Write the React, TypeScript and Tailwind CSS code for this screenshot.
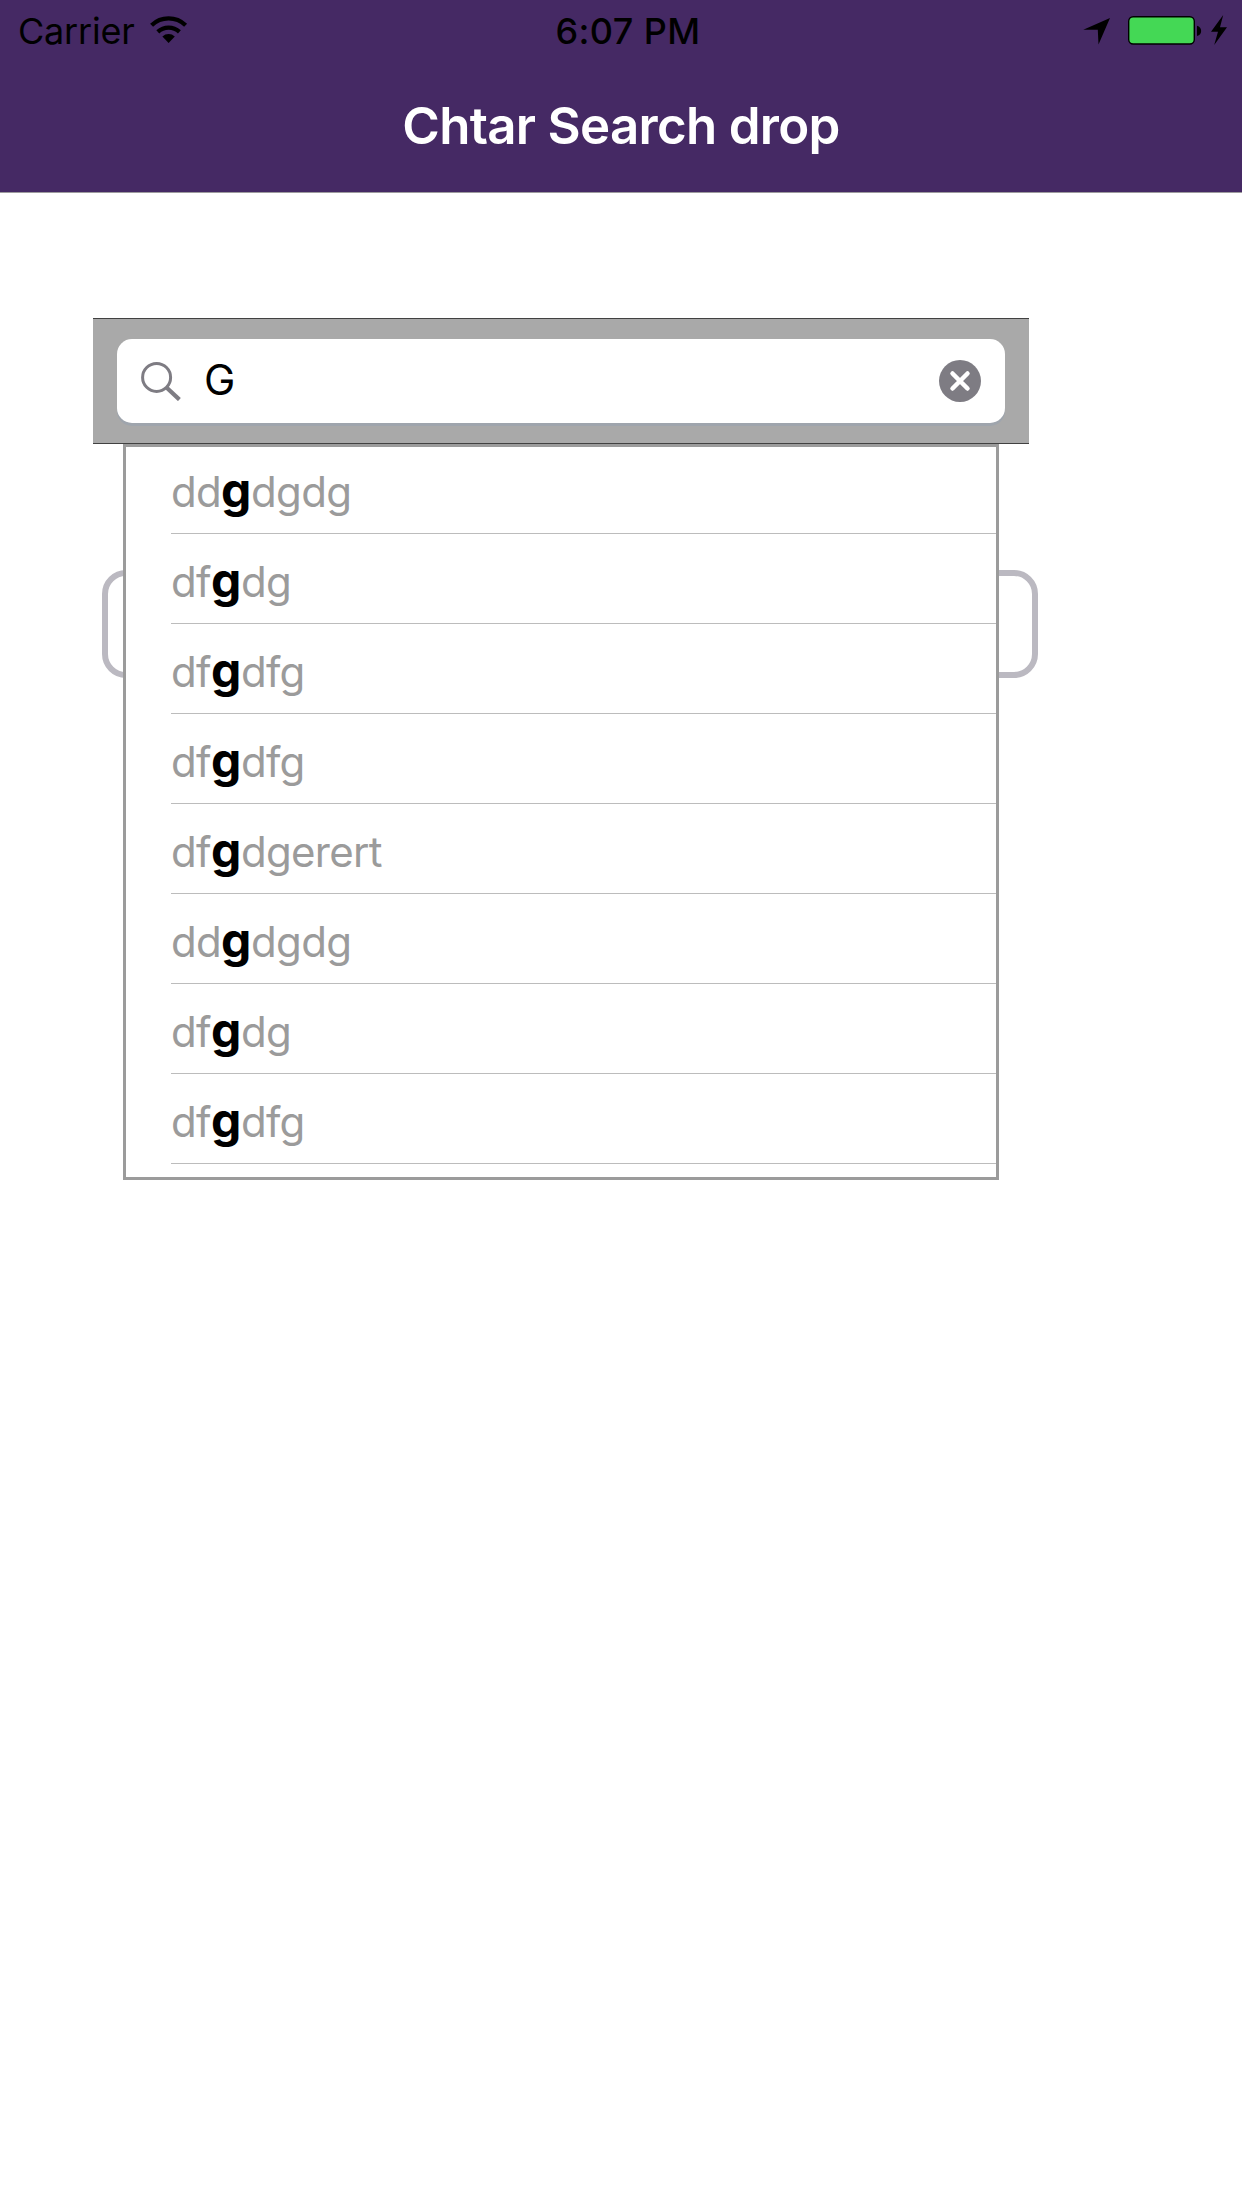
const results = ["ddgdgdg", "dfgdg", "dfgdfg", "dfgdfg", "dfgdgerert", "ddgdgdg", "dfgdg", "dfgdfg"];

function StatusBar() {
  return (
    <div className="grid h-[60px] grid-cols-3 items-center text-[36px] leading-none text-black">
      <div className="flex items-center pl-[18px]">
        <span className="pt-[2px] tracking-[-0.2px]">Carrier</span>
        <svg className="ml-[15px] h-[28px] w-[38px]" viewBox="0 0 38 28">
          <path
            d="M1.600 9.300a24.500 24.500 0 0 1 34 0M7.800 15.800a16 16 0 0 1 21.600 0"
            fill="none"
            stroke="#000"
            strokeWidth="4.300"
          />
          <path d="M18.600 27 12.400 20.600a9 9 0 0 1 12.400 0z" />
        </svg>
      </div>
      <span className="pt-[2px] pl-[14px] text-center font-medium tracking-[0.4px]">6:07 PM</span>
      <svg className="ml-auto h-[60px] w-[182px]" viewBox="0 0 182 60">
        <path d="M50 18 23.3 29.8H37.8L38.5 44.5z" />
        <rect x="68.7" y="16.7" width="65.600" height="27.300" rx="4.500" fill="#44d855" stroke="#000" strokeWidth="1.400" />
        <path d="M137 25.7c5.5 1.5 5.5 9 0 10.4z" />
        <path d="M163.2 15 151 31.7h7L154.2 45 167 27.3h-7z" />
      </svg>
    </div>
  );
}

function Result({ text }: { text: string }) {
  const at = text.indexOf("g");
  return (
    <li className="ml-[45px] flex h-[90px] items-baseline border-b border-[#bcbcbc] text-[42px] leading-[95px] tracking-[-0.7px] text-[#9b9b9b] first:-mt-[3px]">
      <span>{text.slice(0, at)}</span>
      <b className="text-[48px] leading-none font-[650] tracking-[-0.3px] text-black">g</b>
      <span>{text.slice(at + 1)}</span>
    </li>
  );
}

export default function App() {
  return (
    <div className="min-h-[2208px] w-[1242px] bg-white font-['Inter',sans-serif]">
      <header className="h-[193px] border-b border-[#9d9b9e] bg-[#452964]">
        <StatusBar />
        <h1 className="text-center text-[51px] leading-[132px] font-semibold tracking-[-0.7px] text-white">
          Chtar Search drop
        </h1>
      </header>
      <main className="pt-[125px]">
        <div className="ml-[93px] h-[126px] w-[936px] border-y border-[#414141] bg-[#a9a9a9] px-[24px] pt-[20px]">
          <div className="flex h-[84px] items-center rounded-[15px] bg-white pr-[24px] pl-[23px] shadow-[0_3px_0_#9fa5ad]">
            <svg className="h-[40px] w-[41px]" viewBox="0 0 41 40" fill="none" stroke="#7e7c83">
              <circle cx="16.6" cy="16.4" r="14" strokeWidth="3" />
              <path d="M26.500 26.500 39.400 38.600" strokeWidth="4.200" />
            </svg>
            <span className="ml-[23px] pb-[3px] text-[42px] leading-none">G</span>
            <svg className="ml-auto h-[42px] w-[42px]" viewBox="0 0 42 42">
              <circle cx="21" cy="21" r="21" fill="#7e7c83" />
              <path d="m13.500 13.500 15 15m0-15-15 15" stroke="#fff" strokeWidth="4.500" strokeLinecap="round" />
            </svg>
          </div>
        </div>
        <div className="relative">
          <div className="absolute top-[126px] left-[102px] h-[108px] w-[936px] rounded-[24px] border-[6px] border-[#bbb9c1]" />
          <ul className="relative ml-[123px] h-[736px] w-[876px] overflow-hidden border-[3px] border-[#9b9b9b] bg-white">
            {results.map((text, i) => (
              <Result key={i} text={text} />
            ))}
          </ul>
        </div>
      </main>
    </div>
  );
}
